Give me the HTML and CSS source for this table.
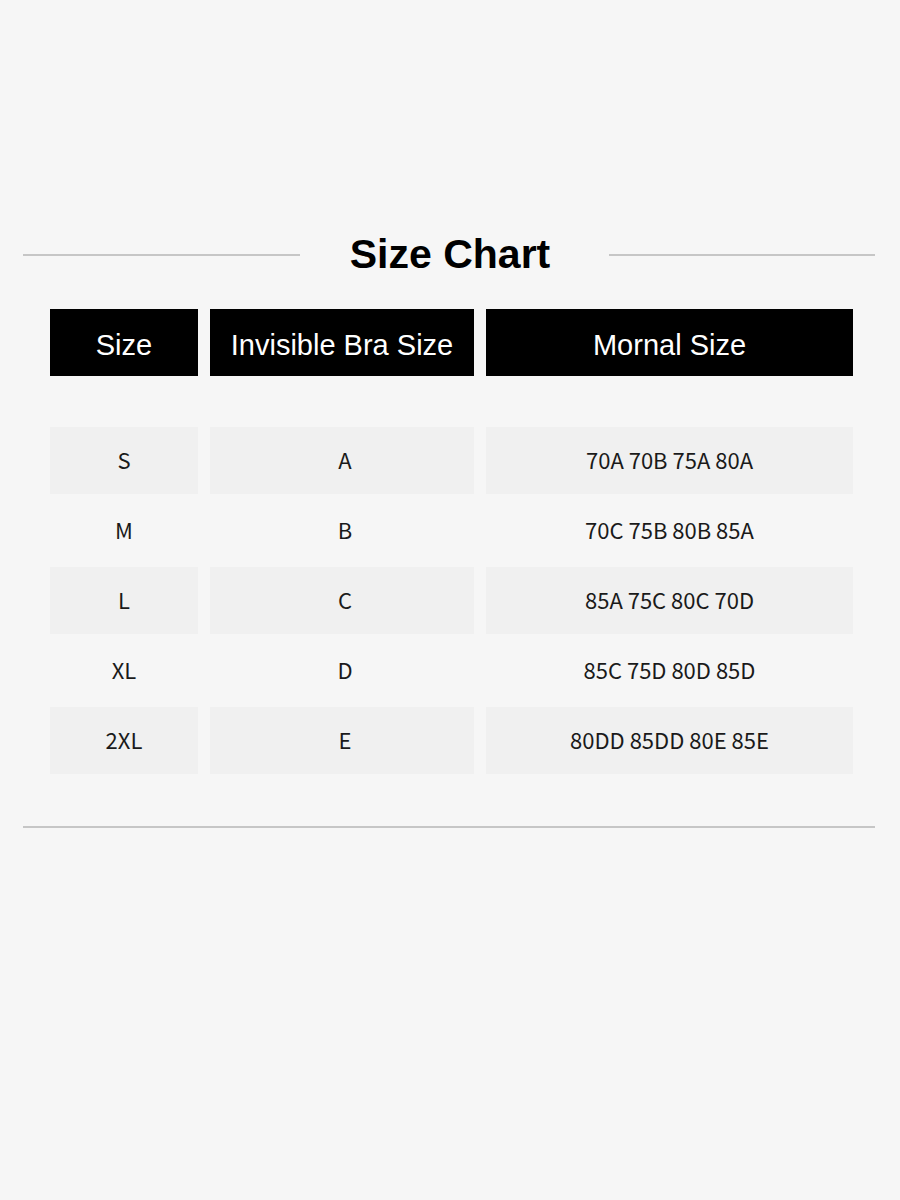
FILE: index.html
```html
<!DOCTYPE html>
<html lang="en">
<head>
<meta charset="utf-8">
<title>Size Chart</title>
<link rel="stylesheet" href="styles.css">
</head>
<body>
<main class="page">
  <div class="title-row">
    <span class="rule"></span>
    <h1 class="title">Size Chart</h1>
    <span class="rule"></span>
  </div>

  <div class="table">
    <div class="head">
      <div class="th">Size</div>
      <div class="th">Invisible Bra Size</div>
      <div class="th">Mornal Size</div>
    </div>
    <div class="body">
      <div class="row shaded"><div class="td">S</div><div class="td td-mid">A</div><div class="td">70A 70B 75A 80A</div></div>
      <div class="row"><div class="td">M</div><div class="td td-mid">B</div><div class="td">70C 75B 80B 85A</div></div>
      <div class="row shaded"><div class="td">L</div><div class="td td-mid">C</div><div class="td">85A 75C 80C 70D</div></div>
      <div class="row"><div class="td">XL</div><div class="td td-mid">D</div><div class="td">85C 75D 80D 85D</div></div>
      <div class="row shaded"><div class="td">2XL</div><div class="td td-mid">E</div><div class="td">80DD 85DD 80E 85E</div></div>
    </div>
  </div>

  <div class="bottom-rule"></div>
</main>
</body>
</html>
```

FILE: styles.css
```css
html, body {
  margin: 0;
  padding: 0;
  background: #f6f6f6;
}

.page {
  width: 900px;
  height: 1200px;
  box-sizing: border-box;
  padding: 230px 25px 0 23px;
}

.title-row {
  display: grid;
  grid-template-columns: 277px 1fr 266px;
  align-items: center;
  height: 48px;
}

.rule {
  display: block;
  height: 2px;
  margin-top: 2px;
  background: #c6c6c6;
}

.title {
  margin: 0 9px 0 0;
  font-family: "Liberation Sans", Arial, sans-serif;
  font-weight: bold;
  font-size: 41px;
  line-height: 48px;
  color: #000;
  text-align: center;
}

.table {
  margin: 31px 22px 0 27px;
}

.head,
.row {
  display: grid;
  grid-template-columns: 148px 264px 367px;
  column-gap: 12px;
}

.th {
  height: 67px;
  box-sizing: border-box;
  padding-top: 5px;
  display: flex;
  align-items: center;
  justify-content: center;
  background: #000;
  color: #fff;
  font-family: "Liberation Sans", Arial, sans-serif;
  font-size: 29px;
}

.body {
  margin-top: 51px;
  display: grid;
  row-gap: 3px;
}

.td {
  height: 67px;
  box-sizing: border-box;
  padding-bottom: 3px;
  display: flex;
  align-items: center;
  justify-content: center;
  font-family: "Noto Sans CJK SC", "Noto Sans", sans-serif;
  font-size: 22px;
  color: #1a1a1a;
}

.td-mid {
  padding-left: 6px;
}

.shaded .td {
  background: #f0f0f0;
}

.bottom-rule {
  margin-top: 52px;
  height: 2px;
  background: #c6c6c6;
}
```
